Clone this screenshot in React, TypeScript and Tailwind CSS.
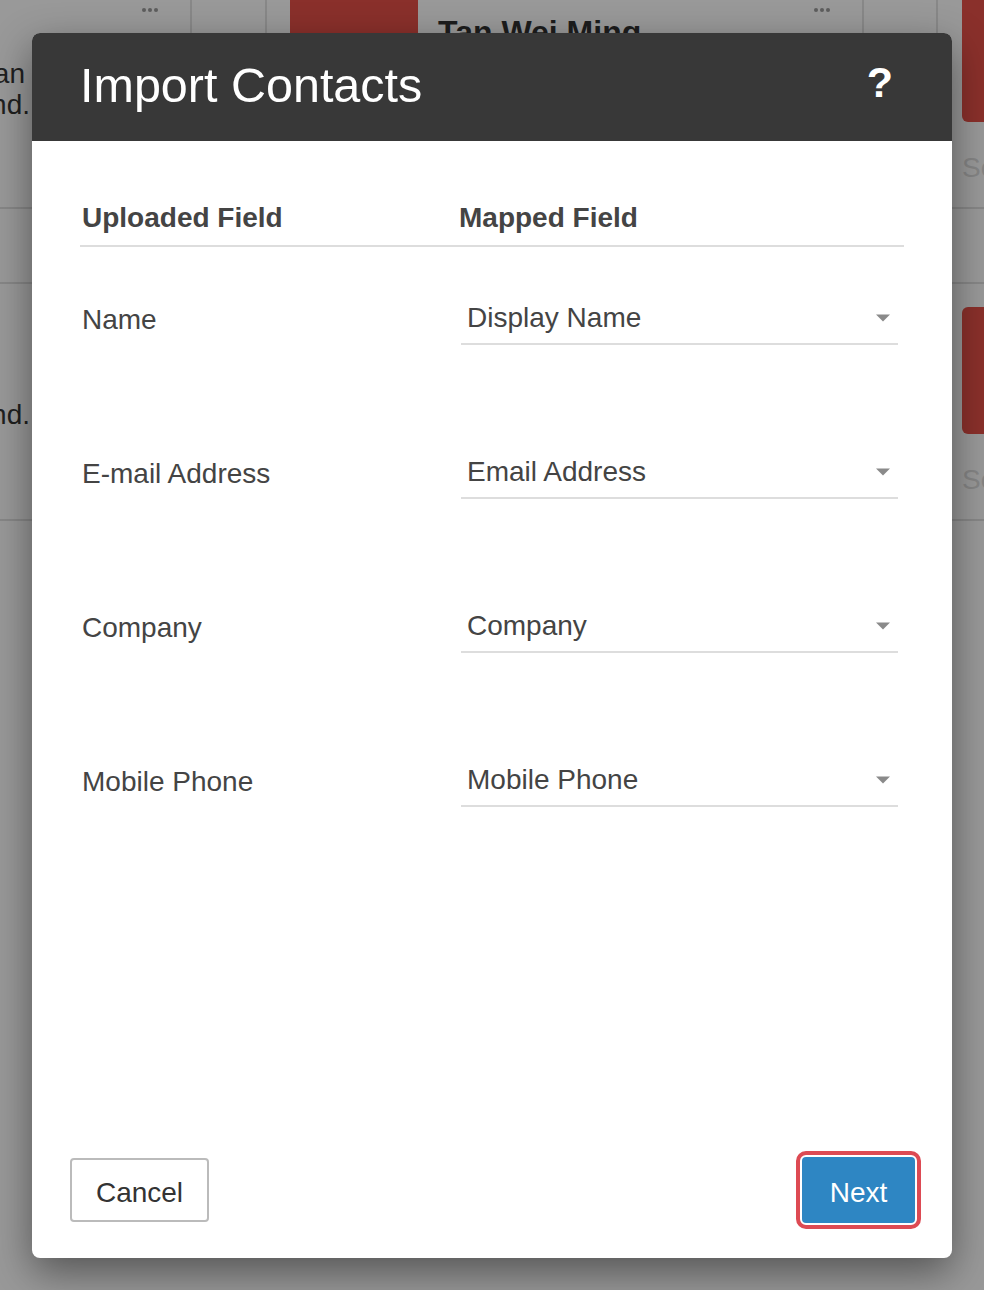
import React from "react";

const Dots = () => (
  <div className="flex gap-[2px]">
    <span className="w-[4px] h-[4px] rounded-full bg-[#5e5e5e]" />
    <span className="w-[4px] h-[4px] rounded-full bg-[#5e5e5e]" />
    <span className="w-[4px] h-[4px] rounded-full bg-[#5e5e5e]" />
  </div>
);

const Caret = () => (
  <svg width="14" height="8" viewBox="0 0 14 8" className="shrink-0">
    <path d="M0 0.5 L14 0.5 L7 7.5 Z" fill="#8a8a8a" />
  </svg>
);

const rows: [string, string][] = [
  ["Name", "Display Name"],
  ["E-mail Address", "Email Address"],
  ["Company", "Company"],
  ["Mobile Phone", "Mobile Phone"],
];

export default function App() {
  return (
    <div className="relative w-[984px] h-[1290px] overflow-hidden bg-[#999999] font-['Liberation_Sans',Arial,sans-serif]">
      {/* dimmed page behind the dialog */}
      <div className="flex flex-col">
        <div className="flex h-[209px] border-b-2 border-[#878787]">
          <div className="w-[190px] shrink-0 flex flex-col">
            <div className="flex justify-end pr-[32px] pt-[8px]">
              <Dots />
            </div>
            <div className="mt-[46px] w-[30px] flex flex-col text-[28px] leading-[31px] text-[#1f1f1f] overflow-hidden">
              <div className="flex justify-end pr-[5px] whitespace-nowrap">can</div>
              <div className="flex justify-end whitespace-nowrap">and.</div>
            </div>
          </div>
          <div className="w-[75px] h-[40px] shrink-0 border-l-2 border-[#888888]" />
          <div className="w-[25px] h-[40px] shrink-0 border-l-2 border-[#888888]" />
          <div className="w-[128px] h-[60px] shrink-0 bg-[#8a302b]" />
          <div className="w-[444px] shrink-0 flex justify-between pl-[20px] pr-[32px]">
            <div className="mt-[13px] text-[32px] leading-[38px] font-bold text-[#1d1d1d] whitespace-nowrap">
              Tan Wei Ming
            </div>
            <div className="pt-[8px]">
              <Dots />
            </div>
          </div>
          <div className="w-[74px] h-[40px] shrink-0 border-l-2 border-[#888888]" />
          <div className="w-[26px] h-[40px] shrink-0 border-l-2 border-[#888888]" />
          <div className="flex-1 flex flex-col">
            <div className="h-[122px] bg-[#8a302b] rounded-bl-[6px]" />
            <div className="mt-[28px] text-[28px] leading-[36px] text-[#858585] whitespace-nowrap">Se</div>
          </div>
        </div>
        <div className="h-[75px] border-b-2 border-[#878787]" />
        <div className="flex justify-between h-[237px] border-b-2 border-[#878787]">
          <div className="mt-[115px] w-[30px] flex justify-end overflow-hidden text-[28px] leading-[31px] text-[#1f1f1f] whitespace-nowrap">
            and.
          </div>
          <div className="w-[22px] flex flex-col pt-[23px]">
            <div className="h-[127px] bg-[#8a302b] rounded-l-[6px]" />
            <div className="mt-[28px] text-[28px] leading-[36px] text-[#858585] whitespace-nowrap">Se</div>
          </div>
        </div>
      </div>

      {/* dialog */}
      <div className="absolute left-[32px] top-[33px] w-[920px] h-[1225px] rounded-[8px] overflow-hidden bg-white flex flex-col shadow-[0_14px_40px_rgba(0,0,0,0.45)]">
        <div className="h-[108px] shrink-0 bg-[#383838] flex items-center justify-between pl-[48px] pr-[59px] pb-[4px]">
          <div className="text-[48.5px] leading-none text-white">Import Contacts</div>
          <div className="mb-[5px] text-[43px] leading-none font-bold text-white">?</div>
        </div>

        <div className="flex-1 px-[48px] pt-[57px]">
          <div className="grid grid-cols-[377px_1fr] pb-[7px] border-b-2 border-[#dddddd] text-[28px] leading-[40px] font-bold text-[#444444]">
            <div className="pl-[2px]">Uploaded Field</div>
            <div className="pl-[2px]">Mapped Field</div>
          </div>
          <div className="mt-[50px] flex flex-col gap-[106px]">
            {rows.map(([label, value]) => (
              <div key={label} className="grid grid-cols-[381px_437px] items-start">
                <div className="mt-[3px] pl-[2px] text-[28px] leading-[40px] text-[#444444]">{label}</div>
                <div className="flex items-center justify-between pl-[6px] pr-[8px] pt-[1px] pb-[5px] border-b-2 border-[#dddddd]">
                  <span className="text-[28px] leading-[40px] text-[#444444]">{value}</span>
                  <Caret />
                </div>
              </div>
            ))}
          </div>
        </div>

        <div className="shrink-0 flex items-center justify-between pl-[38px] pr-[37px] pb-[35px]">
          <button className="w-[139px] h-[64px] pt-[6px] border-2 border-[#bbbbbb] rounded-[4px] bg-white text-[28px] text-[#333333]">
            Cancel
          </button>
          <button className="w-[113px] h-[66px] pt-[6px] rounded-[4px] bg-[#2e86c3] text-[28px] text-white outline-[4px] outline-solid outline-[#dd4a53] outline-offset-[2px]">
            Next
          </button>
        </div>
      </div>
    </div>
  );
}
